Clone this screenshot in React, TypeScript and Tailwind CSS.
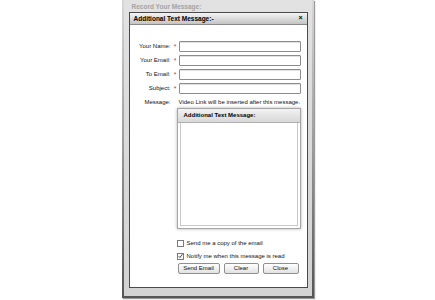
import { type ReactNode } from "react";

type FieldProps = {
  label: string;
};

function Field({ label }: FieldProps) {
  return (
    <div className="flex items-center h-[11px]">
      <span className="w-[42px] text-right pr-[1px]">{label}</span>
      <span className="w-[7px] text-center text-[#d83a3a] text-[7px] leading-none">*</span>
      <div className="w-[122px] h-[11px] rounded-[1px] border border-[#8c8c8c] bg-white shadow-[inset_0_1px_0_#e2e2e2]" />
    </div>
  );
}

function Check({ checked, children }: { checked?: boolean; children: ReactNode }) {
  return (
    <div className="flex items-center gap-[3px] h-[8px]">
      <div className="w-[7px] h-[7px] border border-[#7a7a7a] bg-white flex items-center justify-center">
        {checked && (
          <svg width="6" height="6" viewBox="0 0 6 6">
            <path d="M0.8 3.2 L2.3 4.8 L5.3 0.8" fill="none" stroke="#222" strokeWidth="1" />
          </svg>
        )}
      </div>
      <span>{children}</span>
    </div>
  );
}

function Btn({ w, children }: { w: string; children: ReactNode }) {
  return (
    <div
      className={`${w} h-[11px] flex items-center justify-center rounded-[2px] border border-[#909090] bg-gradient-to-b from-white to-[#e2e2e2]`}
    >
      {children}
    </div>
  );
}

export default function App() {
  return (
    <div className="w-[435px] h-[300px] bg-white flex justify-center font-['Liberation_Sans',Arial,sans-serif] text-[6px] text-[#111]">
      {/* outer frame */}
      <div className="w-[192px] h-[298px] p-[2px] pt-0 bg-gradient-to-b from-[#d8d8d8] via-[#9a9a9a] to-[#555] shadow-[1px_1px_1px_rgba(0,0,0,0.4)]">
        <div className="h-full bg-gradient-to-b from-[#e2e2e2] to-[#d2d2d2] px-[5px] flex flex-col">
          <div className="h-[12px] pt-[3px] pl-[3px] overflow-hidden text-[#a4a4a4] font-bold leading-[8px] text-[6.5px]">
            Record Your Message:
          </div>

          {/* dialog */}
          <div className="w-[179px] h-[276px] bg-white border border-[#4a4a4a] flex flex-col">
            <div className="h-[12px] flex items-center justify-between px-[4px] bg-gradient-to-b from-[#f4f4f4] to-[#c4c4c4] border-b border-[#8a8a8a] font-bold text-[6.5px] text-black">
              <span>Additional Text Message:-</span>
              <span className="text-[7px]">×</span>
            </div>

            <div className="flex flex-col pt-[16px] gap-[3px]">
              <Field label="Your Name:" />
              <Field label="Your Email:" />
              <Field label="To Email:" />
              <Field label="Subject:" />
              <div className="flex items-center h-[8px] mt-[1px]">
                <span className="w-[41px] text-right">Message:</span>
                <span className="pl-[8px]">Video Link will be inserted after this message.</span>
              </div>
            </div>

            <div className="ml-[47px] mt-[2px] w-[124px] h-[121px] border border-[#a6a6a6] shadow-[0_0_3px_rgba(0,0,0,0.3)] flex flex-col bg-white">
              <div className="h-[14px] flex items-center pl-[6px] bg-gradient-to-b from-[#f2f2f2] to-[#d8d8d8] border-b border-[#b0b0b0] font-bold text-black">
                Additional Text Message:
              </div>
              <div className="flex-1 m-[2px] mt-0 border-x border-b border-[#c8c8c8]" />
            </div>

            <div className="ml-[47px] mt-[10px] flex flex-col gap-[5px]">
              <Check>Send me a copy of the email</Check>
              <Check checked>Notify me when this message is read</Check>
            </div>

            <div className="ml-[48px] mt-[3px] flex gap-[4px]">
              <Btn w="w-[42px]">Send Email</Btn>
              <Btn w="w-[35px]">Clear</Btn>
              <Btn w="w-[36px]">Close</Btn>
            </div>
          </div>
        </div>
      </div>
    </div>
  );
}
